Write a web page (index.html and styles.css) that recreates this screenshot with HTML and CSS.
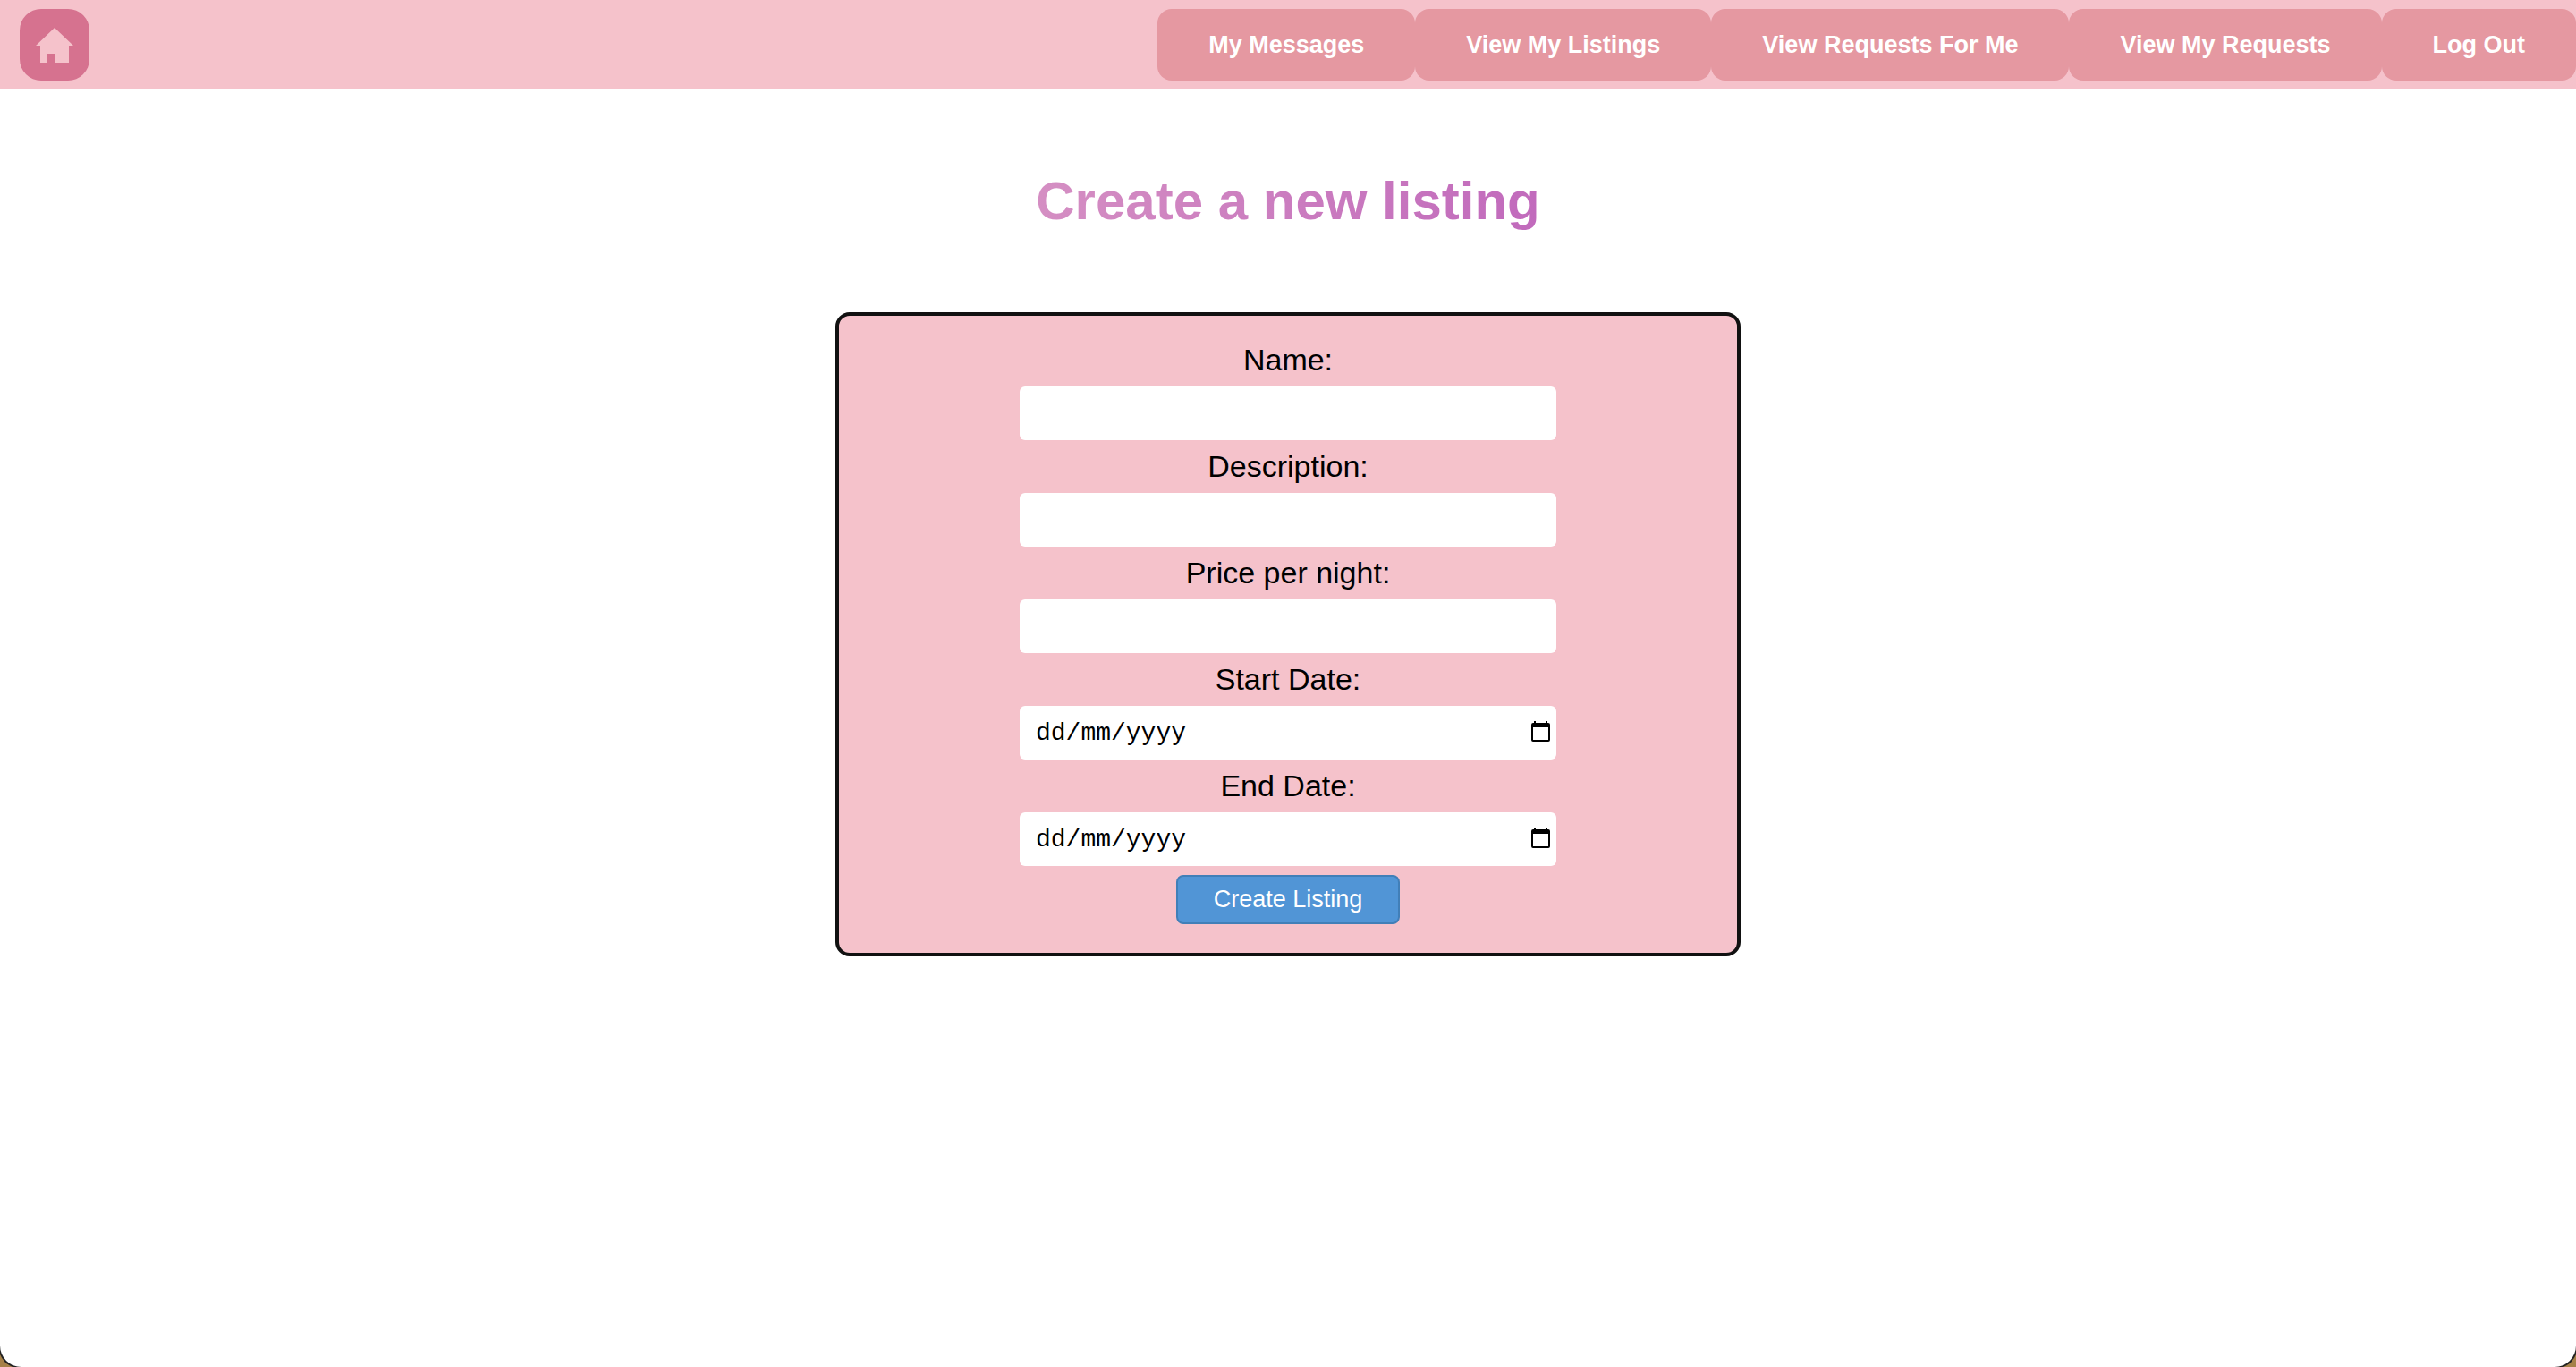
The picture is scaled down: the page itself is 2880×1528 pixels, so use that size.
FILE: index.html
```html
<!DOCTYPE html>
<html lang="en-GB">
<head>
<meta charset="utf-8">
<title>Create a new listing</title>
<link rel="stylesheet" href="styles.css">
</head>
<body>
<header class="navbar">
  <a class="home" href="#" aria-label="Home">
    <svg class="home-icon" viewBox="0 0 42 40" aria-hidden="true"><path d="M21 1 42 21H37V40H22V30H13V40H5V21H0Z"/></svg>
  </a>
  <nav class="nav-links">
    <button class="nav-button" type="button">My Messages</button>
    <button class="nav-button" type="button">View My Listings</button>
    <button class="nav-button" type="button">View Requests For Me</button>
    <button class="nav-button" type="button">View My Requests</button>
    <button class="nav-button" type="button">Log Out</button>
  </nav>
</header>
<main class="content">
  <h1 class="title">Create a new listing</h1>
  <form class="listing-form">
    <label class="label" for="name">Name:</label>
    <input class="field" id="name" type="text">
    <label class="label" for="description">Description:</label>
    <input class="field" id="description" type="text">
    <label class="label" for="price">Price per night:</label>
    <input class="field" id="price" type="text">
    <label class="label" for="start">Start Date:</label>
    <div class="field date-field">
      <input class="date-input" id="start" type="text" placeholder="dd/mm/yyyy">
      <button class="picker" type="button" aria-label="Choose start date">
        <svg class="picker-icon" viewBox="0 0 21 23" aria-hidden="true"><path fill-rule="evenodd" d="M3 0H5V2H16V0H18V2H19Q21 2 21 4V21Q21 23 19 23H2Q0 23 0 21V4Q0 2 2 2H3ZM2 7V21H19V7Z"/></svg>
      </button>
    </div>
    <label class="label" for="end">End Date:</label>
    <div class="field date-field">
      <input class="date-input" id="end" type="text" placeholder="dd/mm/yyyy">
      <button class="picker" type="button" aria-label="Choose end date">
        <svg class="picker-icon" viewBox="0 0 21 23" aria-hidden="true"><path fill-rule="evenodd" d="M3 0H5V2H16V0H18V2H19Q21 2 21 4V21Q21 23 19 23H2Q0 23 0 21V4Q0 2 2 2H3ZM2 7V21H19V7Z"/></svg>
      </button>
    </div>
    <button class="submit" type="submit">Create Listing</button>
  </form>
</main>
</body>
</html>
```

FILE: styles.css
```css
* {
  box-sizing: border-box;
}

html {
  background: #a58047;
}

body {
  margin: 0;
  min-height: 100vh;
  background: #fff;
  border-radius: 0 0 24px 24px;
  box-shadow: 0 0 0 2px #222;
  font-family: "Liberation Sans", Arial, sans-serif;
  color: #000;
}

.navbar {
  display: flex;
  align-items: center;
  justify-content: space-between;
  padding: 10px 0 10px 22px;
  background: #f5c2cb;
}

.home {
  display: flex;
  align-items: center;
  justify-content: center;
  width: 78px;
  height: 80px;
  border-radius: 24px;
  background: #d6728f;
}

.home-icon {
  width: 42px;
  height: 40px;
  fill: #f5c2cb;
}

.nav-links {
  display: flex;
}

.nav-button {
  height: 80px;
  padding: 0 57px;
  border: 0;
  border-radius: 16px;
  background: #e598a1;
  color: #fff;
  font-family: inherit;
  font-size: 27px;
  font-weight: 700;
}

.content {
  display: flex;
  flex-direction: column;
  align-items: center;
  gap: 90px;
  padding: 91px 20px;
}

.title {
  margin: 0;
  font-size: 60px;
  line-height: 68px;
  background: linear-gradient(100deg, #d58fc3, #c16abc);
  background-clip: text;
  color: transparent;
}

.listing-form {
  display: flex;
  flex-direction: column;
  align-items: center;
  gap: 10px;
  width: 100%;
  max-width: 1012px;
  padding: 30px 30px 32px;
  border: 4px solid #111;
  border-radius: 16px;
  background: #f5c2cb;
}

.label {
  font-size: 34px;
  line-height: 39px;
}

.field {
  width: 100%;
  max-width: 600px;
  height: 60px;
  padding: 0 18px;
  border: 0;
  border-radius: 6px;
  background: #fff;
  font-family: "Liberation Mono", "Courier New", monospace;
  font-size: 28px;
}

.date-field {
  display: flex;
  align-items: center;
  padding-right: 7px;
}

.date-input {
  flex: 1;
  min-width: 0;
  padding: 0;
  border: 0;
  background: none;
  color: #000;
  font: inherit;
}

.date-input::placeholder {
  color: #000;
}

.picker {
  display: flex;
  padding: 0 0 3px;
  border: 0;
  background: none;
}

.picker-icon {
  width: 21px;
  height: 23px;
}

.submit {
  height: 55px;
  padding: 0 40px;
  border: 2px solid #417fb8;
  border-radius: 8px;
  background: #5195d6;
  color: #fff;
  font-family: inherit;
  font-size: 27px;
}
```
